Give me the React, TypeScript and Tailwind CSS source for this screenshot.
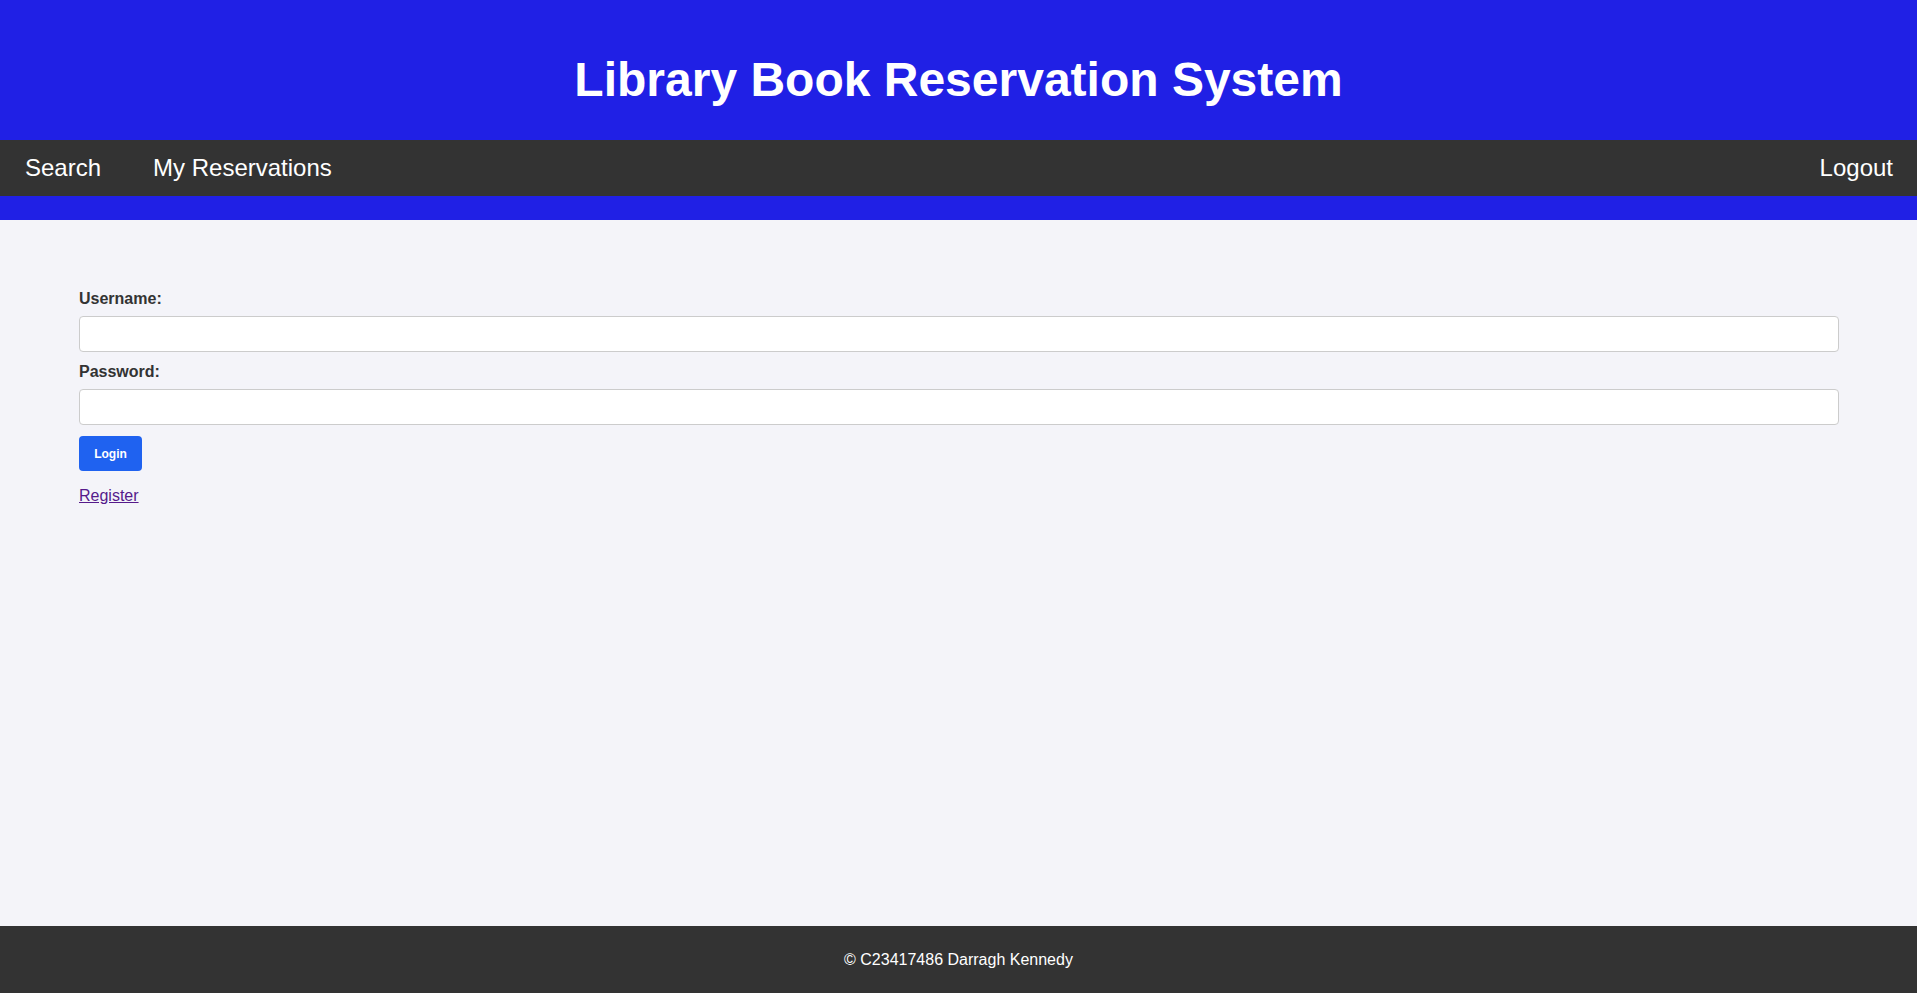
export default function App() {
  return (
    <div className="min-h-[993px] flex flex-col bg-[#f4f4f9] font-['Liberation_Sans',Arial,sans-serif]">
      <header className="bg-[#2020e5] pb-[24px]">
        <h1 className="pt-[52px] pb-[33px] text-center text-[48px] leading-[55px] font-bold text-white">
          Library Book Reservation System
        </h1>
        <nav className="h-[56px] bg-[#333333] flex items-center justify-between text-white text-[24px] pl-[25px] pr-[24px]">
          <div className="flex items-center gap-[52px]">
            <a href="#" className="text-white no-underline">Search</a>
            <a href="#" className="text-white no-underline">My Reservations</a>
          </div>
          <a href="#" className="text-white no-underline">Logout</a>
        </nav>
      </header>

      <main className="flex-1 pl-[79px] pr-[78px] pt-[69px]">
        <form className="flex flex-col" onSubmit={(e) => e.preventDefault()}>
          <label className="pt-[1px] text-[16px] leading-[18px] font-bold text-[#333333] mb-[8px]">Username:</label>
          <input
            type="text"
            className="h-[36px] bg-white border border-[#cccccc] rounded-[4px] mb-[10px] px-2"
          />
          <label className="pt-[1px] text-[16px] leading-[18px] font-bold text-[#333333] mb-[8px]">Password:</label>
          <input
            type="password"
            className="h-[36px] bg-white border border-[#cccccc] rounded-[4px] mb-[11px] px-2"
          />
          <div>
            <button className="w-[63px] h-[35px] bg-[#1f62f0] text-white text-[12px] font-bold rounded-[4px]">
              Login
            </button>
          </div>
        </form>
        <a href="#" className="inline-block mt-[16px] text-[16px] leading-[18px] text-[#551a8b] underline">
          Register
        </a>
      </main>

      <footer className="h-[67px] bg-[#333333] flex items-center justify-center text-white text-[16px]">
        © C23417486 Darragh Kennedy
      </footer>
    </div>
  );
}
